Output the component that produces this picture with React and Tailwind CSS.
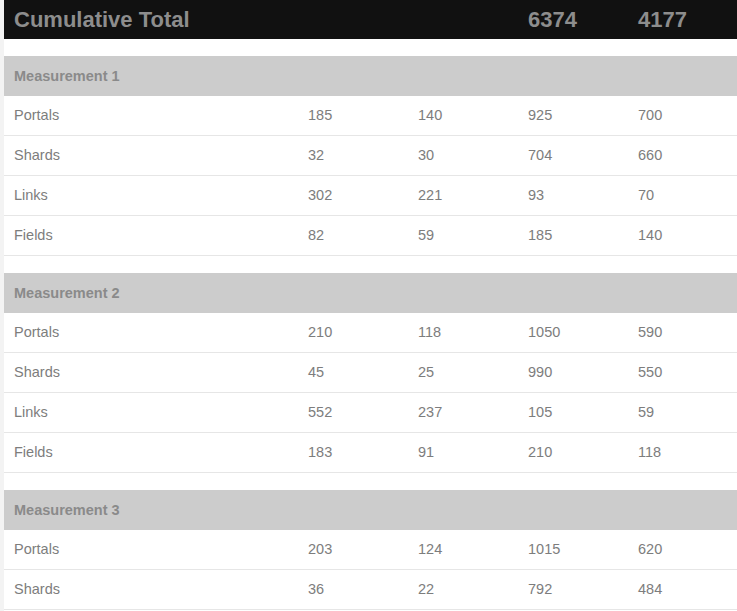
import React from "react";

const groups = [
  {
    name: "Measurement 1",
    rows: [
      ["Portals", 185, 140, 925, 700],
      ["Shards", 32, 30, 704, 660],
      ["Links", 302, 221, 93, 70],
      ["Fields", 82, 59, 185, 140],
    ],
  },
  {
    name: "Measurement 2",
    rows: [
      ["Portals", 210, 118, 1050, 590],
      ["Shards", 45, 25, 990, 550],
      ["Links", 552, 237, 105, 59],
      ["Fields", 183, 91, 210, 118],
    ],
  },
  {
    name: "Measurement 3",
    rows: [
      ["Portals", 203, 124, 1015, 620],
      ["Shards", 36, 22, 792, 484],
    ],
  },
];

const grid = "grid grid-cols-[294px_110px_110px_110px_1fr]";

export default function App() {
  return (
    <div className="w-[737px] h-[611px] overflow-hidden bg-[#f3f3f3] pl-[4px] font-['Liberation_Sans',Arial,sans-serif]">
      <div className="bg-white h-full">
        <div className={`${grid} h-[39px] bg-[#111111] items-center text-[22px] font-bold text-[#8d8d8d]`}>
          <div className="pl-[10px]">Cumulative Total</div>
          <div></div>
          <div></div>
          <div className="pl-[10px]">6374</div>
          <div className="pl-[10px]">4177</div>
        </div>
        {groups.map((g) => (
          <div key={g.name} className="pt-[17px]">
            <div className="h-[40px] bg-[#cccccc] flex items-center pl-[10px] pt-[1px] text-[14.5px] font-bold text-[#8a8a8a]">
              {g.name}
            </div>
            {g.rows.map((r, i) => (
              <div
                key={i}
                className={`${grid} h-[40px] items-center pt-[1px] border-b border-[#e6e6e6] text-[14.5px] text-[#7d7d7d]`}
              >
                {r.map((c, j) => (
                  <div key={j} className="pl-[10px]">
                    {c}
                  </div>
                ))}
              </div>
            ))}
          </div>
        ))}
      </div>
    </div>
  );
}
